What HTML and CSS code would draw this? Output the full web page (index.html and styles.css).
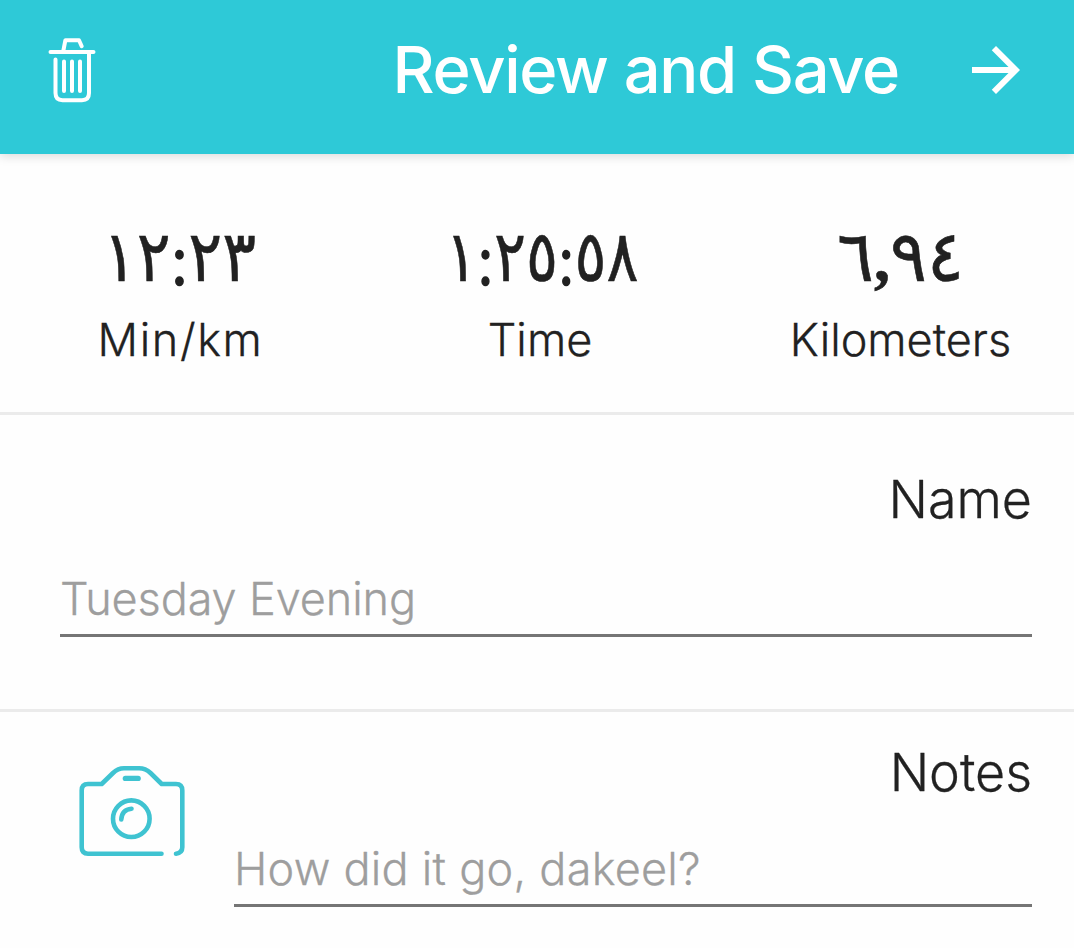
FILE: index.html
```html
<!DOCTYPE html>
<html lang="en">
<head>
    <meta charset="UTF-8">
    <meta name="viewport" content="width=device-width, initial-scale=1.0">
    <title>Review and Save</title>
    <link rel="stylesheet" href="styles.css">
</head>
<body>

    <header class="toolbar">
        <button class="icon-button" aria-label="Delete">
            <svg class="trash" width="48" height="66" viewBox="0 0 48 66">
                <path d="M2.5 15H45.5M15.3 14L17.4 3.2H31L33.7 9.2"/>
                <path d="M7.5 22.5V56Q7.5 63.2 14.5 63.2H34Q41 63.2 41 56V15"/>
                <path d="M16 24.5V54M24 24.5V54M32 24.5V54"/>
            </svg>
        </button>
        <h1 class="title">Review and Save</h1>
        <button class="icon-button" aria-label="Save">
            <svg class="arrow" width="48" height="48" viewBox="4 4 16 16">
                <path d="M12 4l-1.41 1.41L16.17 11H4v2h12.17l-5.58 5.59L12 20l8-8z"/>
            </svg>
        </button>
    </header>

    <section class="stats">
        <div class="stat">
            <div class="value pace">١٢<span class="colon">:</span>٢٣</div>
            <div class="label pace-label">Min/km</div>
        </div>
        <div class="stat">
            <div class="value time">١<span class="colon">:</span>٢٥<span class="colon">:</span>٥٨</div>
            <div class="label">Time</div>
        </div>
        <div class="stat">
            <div class="value distance">٦<span class="comma">,</span>٩٤</div>
            <div class="label">Kilometers</div>
        </div>
    </section>

    <section class="name">
        <label class="heading" for="name">Name</label>
        <input class="field" type="text" id="name" placeholder="Tuesday Evening">
    </section>

    <section class="notes">
        <button class="icon-button photo" aria-label="Add photo">
            <svg class="camera" width="108" height="94" viewBox="0 0 108 94">
                <path d="M83.5 89.7H10Q3.7 89.7 3.7 83.3V26.5Q3.7 20 10 20H23.7L35 9Q40 4.2 46 4.2H61Q67.5 4.2 72.5 9L83.7 20H98Q104.3 20 104.3 26.5V83.3Q104.3 89 98 89.7"/>
                <path class="flash" d="M47.3 14.4H60.2"/>
                <circle cx="53.3" cy="54.7" r="18.3"/>
                <path d="M43.3 55.5Q43.8 45.5 53.5 44.7"/>
            </svg>
        </button>
        <div class="notes-body">
            <label class="heading" for="notes">Notes</label>
            <input class="field notes-field" type="text" id="notes" placeholder="How did it go, dakeel?">
        </div>
    </section>

</body>
</html>
```
FILE: styles.css
```css
* {
    box-sizing: border-box;
}

body {
    margin: 0;
    font-family: Inter, "Liberation Sans", sans-serif;
    background-color: #fefefe;
    color: #212121;
    overflow: hidden;
}

.icon-button {
    display: flex;
    padding: 0;
    border: none;
    background: none;
    cursor: pointer;
}

.toolbar {
    position: relative;
    display: flex;
    align-items: center;
    height: 154px;
    padding: 0 54px 14px 48px;
    background-color: #2ec9d7;
    box-shadow: 0 2px 10px rgba(0, 0, 0, 0.15);
}

.title {
    margin: 0 73px 0 auto;
    font-size: 65px;
    font-weight: 500;
    line-height: 78px;
    letter-spacing: -1.3px;
    white-space: nowrap;
    color: #fff;
}

.trash {
    fill: none;
    stroke: #fff;
    stroke-width: 4;
    stroke-linecap: round;
    stroke-linejoin: round;
}

.arrow {
    fill: #fff;
}

.stats {
    display: grid;
    grid-template-columns: 361px 358px 363px;
    height: 261px;
    padding-top: 65px;
    border-bottom: 3px solid #ebebeb;
}

.stat {
    text-align: center;
    white-space: nowrap;
}

.value {
    height: 93px;
    font-family: "DejaVu Sans", sans-serif;
    font-size: 71px;
    line-height: 76px;
    -webkit-text-stroke: 0.6px;
}

.pace {
    transform: translateX(-1px) scaleX(0.89);
}

.time {
    transform: translateX(2px) scaleX(0.84);
}

.distance {
    transform: scaleX(0.97);
}

.colon {
    position: relative;
    top: 4px;
    font-family: "Liberation Serif", serif;
    -webkit-text-stroke: 1.5px;
}

.comma {
    font-family: "Liberation Serif", serif;
    font-size: 66px;
    font-weight: 700;
}

.label {
    font-size: 45px;
    font-weight: 300;
    line-height: 56px;
    -webkit-text-stroke: 0.3px;
}

.pace-label {
    letter-spacing: 1.6px;
}

.name {
    display: flex;
    flex-direction: column;
    height: 297px;
    padding: 53px 42px 0 60px;
    border-bottom: 3px solid #ebebeb;
}

.heading {
    font-size: 52px;
    font-weight: 300;
    line-height: 64px;
    text-align: right;
    -webkit-text-stroke: 0.3px;
}

.field {
    width: 100%;
    height: 75px;
    margin-top: 30px;
    padding: 0;
    border: none;
    border-bottom: 3px solid #757575;
    outline: none;
    background: none;
    font-family: inherit;
    font-size: 45px;
    font-weight: 300;
    letter-spacing: -0.1px;
}

.field::placeholder {
    color: #9e9e9e;
    opacity: 1;
    -webkit-text-stroke: 0.3px;
}

.notes {
    display: flex;
    padding: 29px 42px 0 78px;
}

.photo {
    flex: none;
    align-self: flex-start;
    margin: 23px 48px 0 0;
}

.camera {
    fill: none;
    stroke: #3fc3d1;
    stroke-width: 4.6;
    stroke-linecap: round;
    stroke-linejoin: round;
}

.flash {
    stroke-width: 5.2;
}

.notes-body {
    display: flex;
    flex: 1;
    flex-direction: column;
}

.notes-field {
    margin-top: 27px;
    letter-spacing: 0.25px;
}
```
